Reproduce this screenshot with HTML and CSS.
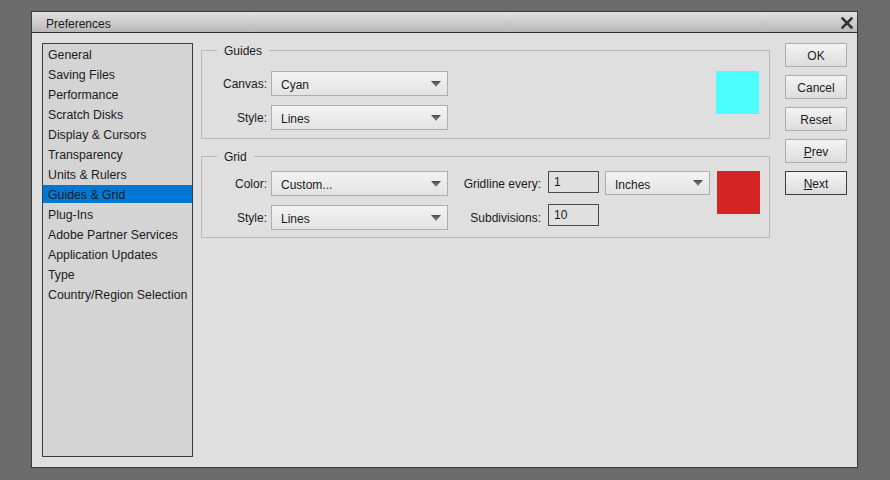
FILE: index.html
```html
<!DOCTYPE html>
<html>
<head>
<meta charset="utf-8">
<link rel="stylesheet" href="styles.css">
</head>
<body>
<div class="dialog">
  <div class="titlebar">
    <span class="title">Preferences</span>
    <svg class="close" width="12" height="12" viewBox="0 0 12 12"><path d="M1.5 1.5 L10.5 10.5 M10.5 1.5 L1.5 10.5" stroke="#353535" stroke-width="2.6" stroke-linecap="square"/></svg>
  </div>
  <div class="body">
    <ul class="nav">
      <li>General</li>
      <li>Saving Files</li>
      <li>Performance</li>
      <li>Scratch Disks</li>
      <li>Display &amp; Cursors</li>
      <li>Transparency</li>
      <li>Units &amp; Rulers</li>
      <li class="sel">Guides &amp; Grid</li>
      <li>Plug-Ins</li>
      <li>Adobe Partner Services</li>
      <li>Application Updates</li>
      <li>Type</li>
      <li>Country/Region Selection</li>
    </ul>
    <div class="main">
      <fieldset class="group guides">
        <legend>Guides</legend>
        <div class="grid">
          <label class="lbl r1">Canvas:</label>
          <div class="select c2 r1"><span>Cyan</span><svg class="arrow" width="10" height="6" viewBox="0 0 10 6"><defs><linearGradient id="ag" x1="0" y1="0" x2="0" y2="1"><stop offset="0" stop-color="#4a4a4a"/><stop offset="1" stop-color="#8a8a8a"/></linearGradient></defs><polygon points="0,0 10,0 5,6" fill="url(#ag)"/></svg></div>
          <div class="swatch cyan"></div>
          <label class="lbl r2">Style:</label>
          <div class="select c2 r2"><span>Lines</span><svg class="arrow" width="10" height="6" viewBox="0 0 10 6"><polygon points="0,0 10,0 5,6" fill="url(#ag)"/></svg></div>
        </div>
      </fieldset>
      <fieldset class="group gridset">
        <legend>Grid</legend>
        <div class="grid">
          <label class="lbl r1">Color:</label>
          <div class="select c2 r1"><span>Custom...</span><svg class="arrow" width="10" height="6" viewBox="0 0 10 6"><polygon points="0,0 10,0 5,6" fill="url(#ag)"/></svg></div>
          <label class="lbl2 r1">Gridline every:</label>
          <div class="input r1">1</div>
          <div class="select unit r1"><span>Inches</span><svg class="arrow" width="10" height="6" viewBox="0 0 10 6"><polygon points="0,0 10,0 5,6" fill="url(#ag)"/></svg></div>
          <div class="swatch red"></div>
          <label class="lbl r2">Style:</label>
          <div class="select c2 r2"><span>Lines</span><svg class="arrow" width="10" height="6" viewBox="0 0 10 6"><polygon points="0,0 10,0 5,6" fill="url(#ag)"/></svg></div>
          <label class="lbl2 r2">Subdivisions:</label>
          <div class="input r2 low">10</div>
        </div>
      </fieldset>
    </div>
    <div class="buttons">
      <button class="btn">OK</button>
      <button class="btn">Cancel</button>
      <button class="btn">Reset</button>
      <button class="btn"><u>P</u>rev</button>
      <button class="btn default"><u>N</u>ext</button>
    </div>
  </div>
</div>
</body>
</html>
```
FILE: styles.css
```css
html, body {
  margin: 0;
  padding: 0;
}
body {
  background: #6b6b6b;
  font-family: "Liberation Sans", Arial, sans-serif;
  font-size: 12px;
  color: #1a1a22;
  width: 890px;
  height: 480px;
  overflow: hidden;
}
.dialog {
  margin: 11px 0 0 31px;
  width: 825px;
  border: 1px solid #3a3a3a;
  background: #dfdfdf;
}
.titlebar {
  height: 20px;
  border-bottom: 1px solid #2a2a2a;
  background: linear-gradient(#e2e2e2, #b8b8b8);
  display: flex;
  align-items: center;
  justify-content: space-between;
  padding: 0 4px 0 14px;
}
.title {
  font-size: 12px;
  line-height: 14px;
  padding-top: 4px;
}
.close {
  margin-top: 1px;
}
.body {
  display: flex;
  align-items: flex-start;
  padding: 10px;
  height: 414px;
}
.nav {
  list-style: none;
  margin: 0;
  padding: 1px 0 0 0;
  width: 149px;
  height: 411px;
  border: 1px solid #3c3c3c;
  background: #d4d4d4;
  display: flex;
  flex-direction: column;
  gap: 2px;
  font-size: 12.3px;
}
.nav li {
  height: 18px;
  line-height: 16px;
  padding-top: 2px;
  box-sizing: border-box;
  padding-left: 5px;
  white-space: nowrap;
}
.nav li.sel {
  background: #0078d7;
}
.main {
  margin-left: 8px;
  width: 569px;
  display: flex;
  flex-direction: column;
  gap: 10px;
}
.group {
  margin: 0;
  border: 1px solid #b8b8b8;
  padding: 0;
  min-width: 0;
}
.group legend {
  margin-left: 15px;
  padding: 0 7px;
  line-height: 14px;
  font-size: 12px;
  position: relative;
  top: 1px;
}
.guides {
  padding-top: 14px;
  padding-bottom: 8px;
}
.gridset {
  padding-top: 8px;
  padding-bottom: 7px;
}
.grid {
  display: grid;
  grid-template-columns: 69px 177px 100px 51px 111px 51px;
  grid-template-rows: 25px 25px;
  row-gap: 9px;
  align-items: center;
}
.r1 { grid-row: 1; }
.r2 { grid-row: 2; }
.c2 { grid-column: 2; }
.lbl {
  grid-column: 1;
  text-align: right;
  padding-right: 4px;
  padding-top: 1px;
}
.lbl2 {
  grid-column: 3;
  text-align: right;
  padding-right: 7px;
  white-space: nowrap;
}
.select {
  box-sizing: border-box;
  height: 25px;
  border: 1px solid #adadad;
  background: linear-gradient(#f3f3f3, #e3e3e3);
  display: flex;
  align-items: center;
  justify-content: space-between;
  padding: 3px 6px 0 9px;
}
.select .arrow {
  margin-top: -3px;
}
.unit {
  grid-column: 5;
  margin-left: 6px;
  height: 24px;
  align-self: start;
}
.input {
  grid-column: 4;
  box-sizing: border-box;
  height: 22px;
  border: 1px solid #4a4a4a;
  background: #e0e0e0;
  padding: 3px 5px 0 5px;
  align-self: start;
}
.input.low {
  margin-top: -1px;
}
.swatch {
  grid-column: 6;
  grid-row: 1 / span 2;
  align-self: start;
  width: 43px;
  height: 43px;
  margin-left: 7px;
}
.guides .swatch {
  margin-left: 6px;
}
.cyan {
  background: #4cffff;
}
.red {
  background: #d52424;
}
.buttons {
  margin-left: 15px;
  display: flex;
  flex-direction: column;
  gap: 8px;
}
.btn {
  width: 62px;
  height: 24px;
  border: 1px solid #adadad;
  background: linear-gradient(#f4f4f4, #dcdcdc);
  font-family: "Liberation Sans", Arial, sans-serif;
  font-size: 12px;
  color: #1a1a22;
  padding: 1px 0 0 0;
  margin: 0;
}
.btn.default {
  border-color: #3c3c3c;
}
```
